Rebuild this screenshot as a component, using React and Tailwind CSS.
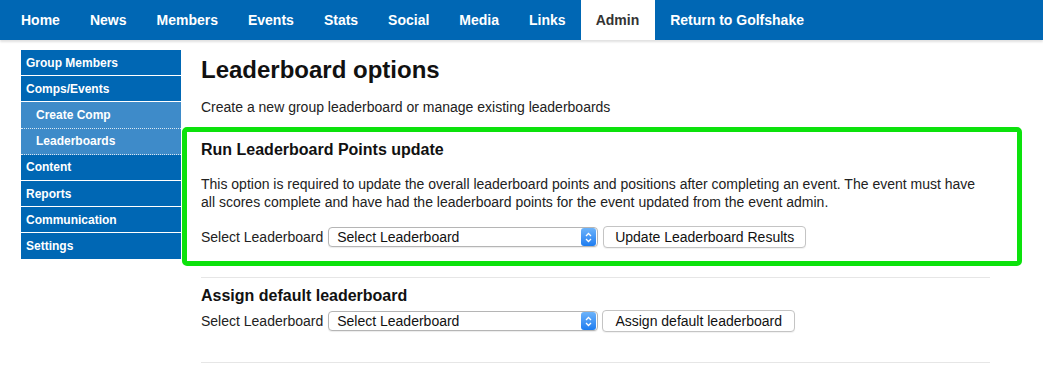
import React from 'react'

const navItems = ['Home', 'News', 'Members', 'Events', 'Stats', 'Social', 'Media', 'Links', 'Admin', 'Return to Golfshake']

const sideItems = [
  { label: 'Group Members' },
  { label: 'Comps/Events' },
  { label: 'Create Comp', sub: true },
  { label: 'Leaderboards', sub: true },
  { label: 'Content' },
  { label: 'Reports' },
  { label: 'Communication' },
  { label: 'Settings' },
]

function SelectBox() {
  return (
    <div className="flex items-center h-[20px] w-[270px] bg-white border border-[#b5b5b5] rounded-[4px] shadow-[0_1px_1px_rgba(0,0,0,0.08)]">
      <span className="flex-1 pl-[8px] text-[14px] leading-[18px] text-[#111]">Select Leaderboard</span>
      <span className="flex items-center justify-center w-[15px] h-[18px] mr-[1px] rounded-[3px] bg-gradient-to-b from-[#6cb3fa] to-[#1a7cf0]">
        <svg width="7" height="11" viewBox="0 0 7 11" fill="none" stroke="white" strokeWidth="1.3">
          <path d="M1 4 L3.5 1.5 L6 4" />
          <path d="M1 7 L3.5 9.5 L6 7" />
        </svg>
      </span>
    </div>
  )
}

function Button({ children, width }) {
  return (
    <button className={`h-[22px] ${width} bg-white border border-[#c4c4c4] rounded-[4px] text-[14px] leading-[18px] text-[#111] shadow-[0_1px_1px_rgba(0,0,0,0.06)]`}>
      {children}
    </button>
  )
}

export default function App() {
  return (
    <div className="w-[1043px] h-[374px] overflow-hidden bg-white font-['Liberation_Sans',Arial,sans-serif] text-[#222]">
      {/* Top nav */}
      <div className="flex h-[40px] pl-[6px] bg-[#0067b4] shadow-[0_2px_2px_rgba(0,0,0,0.12)]">
        {navItems.map(item => (
          <div
            key={item}
            className={`flex items-center px-[15px] text-[14px] font-bold ${item === 'Admin' ? 'bg-white text-[#333] pr-[16px]' : 'text-white'}`}
          >
            {item}
          </div>
        ))}
      </div>

      <div className="flex pt-[10px] pl-[21px]">
        {/* Sidebar */}
        <div className="w-[160px] shrink-0">
          {sideItems.map(item => (
            <div
              key={item.label}
              className={`h-[26.2px] flex items-center text-[12px] font-bold text-white ${item.sub ? 'pl-[15px] bg-[#3e8bc9] border-b border-dotted border-white/80' : 'pl-[5px] bg-[#0067b4] border-b border-white'}`}
            >
              {item.label}
            </div>
          ))}
        </div>

        {/* Main */}
        <div className="w-[789px] ml-[20px] pt-[6px]">
          <h1 className="text-[24px] leading-[28px] font-bold text-[#111]">Leaderboard options</h1>
          <p className="mt-[14px] text-[14px] leading-[18px]">Create a new group leaderboard or manage existing leaderboards</p>

          <div className="mt-[11px] -ml-[19px] -mr-[32px] border-[5px] border-[#0ce20c] rounded-[5px] pl-[14px] pt-[8px] pb-[13px]">
            <h2 className="text-[16px] leading-[20px] font-bold text-[#111]">Run Leaderboard Points update</h2>
            <p className="mt-[15px] pr-[32px] text-[14px] leading-[18px]">
              This option is required to update the overall leaderboard points and positions after completing an event. The event must have all scores complete and have had the leaderboard points for the event updated from the event admin.
            </p>
            <div className="mt-[15px] flex items-center h-[22px]">
              <span className="text-[14px] mr-[5px]">Select Leaderboard</span>
              <SelectBox />
              <span className="ml-[5px]"><Button width="w-[203px]">Update Leaderboard Results</Button></span>
            </div>
          </div>

          <div className="mt-[11px] border-t border-[#e6e6e6]" />
          <h2 className="mt-[8px] text-[16px] leading-[20px] font-bold text-[#111]">Assign default leaderboard</h2>
          <div className="mt-[4px] flex items-center h-[22px]">
            <span className="text-[14px] mr-[5px]">Select Leaderboard</span>
            <SelectBox />
            <span className="ml-[4px]"><Button width="w-[193px]">Assign default leaderboard</Button></span>
          </div>

          <div className="mt-[30px] border-t border-[#e6e6e6]" />
          <h2 className="mt-[8px] text-[16px] leading-[20px] font-bold text-[#111]">Create New Leaderboard</h2>
        </div>
      </div>
    </div>
  )
}
